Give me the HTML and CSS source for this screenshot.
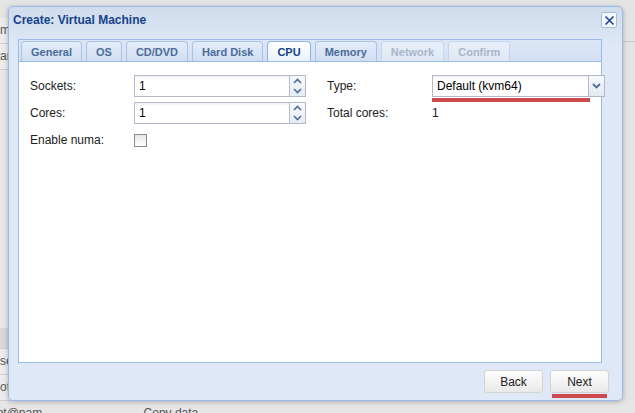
FILE: index.html
```html
<!DOCTYPE html>
<html lang="en">
<head>
    <meta charset="UTF-8">
    <title>Create: Virtual Machine</title>
    <link rel="stylesheet" href="styles.css">
</head>
<body>

<!-- page behind the modal -->
<div class="backdrop">
    <div class="bg-row bg-top">m</div>
    <div class="bg-row">ar</div>
    <div class="bg-fill"></div>
    <div class="bg-row bg-band"></div>
    <div class="bg-row">se</div>
    <div class="bg-row">ot</div>
    <div class="bg-foot">
        <span class="bg-mail">root@pam</span>
        <span class="bg-copy">Copy data</span>
    </div>
</div>
<div class="bg-line"></div>

<div class="win">
    <div class="win-head">
        <span class="win-title">Create: Virtual Machine</span>
        <span class="win-close">
            <svg width="11" height="11" viewBox="0 0 11 11"><path d="M1.5 1.5 L9.5 9.5 M9.5 1.5 L1.5 9.5" stroke="#15428b" stroke-width="1.6" fill="none"/></svg>
        </span>
    </div>

    <div class="tabpanel">
        <div class="tabbar">
            <span class="tab">General</span>
            <span class="tab">OS</span>
            <span class="tab">CD/DVD</span>
            <span class="tab">Hard Disk</span>
            <span class="tab active">CPU</span>
            <span class="tab">Memory</span>
            <span class="tab disabled">Network</span>
            <span class="tab disabled">Confirm</span>
        </div>
        <div class="tabbody">
            <div class="col">
                <div class="field">
                    <label class="lbl">Sockets:</label>
                    <div class="spin">
                        <input class="txt" type="text" value="1">
                        <div class="spin-btns">
                            <span class="arr"><svg width="9" height="6" viewBox="0 0 9 6"><path d="M1 5 L4.5 1.5 L8 5" stroke="#4d6d9e" stroke-width="1.6" fill="none"/></svg></span>
                            <span class="arr"><svg width="9" height="6" viewBox="0 0 9 6"><path d="M1 1 L4.5 4.5 L8 1" stroke="#4d6d9e" stroke-width="1.6" fill="none"/></svg></span>
                        </div>
                    </div>
                </div>
                <div class="field">
                    <label class="lbl">Cores:</label>
                    <div class="spin">
                        <input class="txt" type="text" value="1">
                        <div class="spin-btns">
                            <span class="arr"><svg width="9" height="6" viewBox="0 0 9 6"><path d="M1 5 L4.5 1.5 L8 5" stroke="#4d6d9e" stroke-width="1.6" fill="none"/></svg></span>
                            <span class="arr"><svg width="9" height="6" viewBox="0 0 9 6"><path d="M1 1 L4.5 4.5 L8 1" stroke="#4d6d9e" stroke-width="1.6" fill="none"/></svg></span>
                        </div>
                    </div>
                </div>
                <div class="field short">
                    <label class="lbl">Enable numa:</label>
                    <span class="chk"></span>
                </div>
            </div>
            <div class="col">
                <div class="field">
                    <label class="lbl">Type:</label>
                    <div class="combo">
                        <input class="txt" type="text" value="Default (kvm64)">
                        <span class="trigger"><svg width="9" height="6" viewBox="0 0 9 6"><path d="M1 1 L4.5 4.5 L8 1" stroke="#4d6d9e" stroke-width="1.8" fill="none"/></svg></span>
                        <span class="mark mark-type"></span>
                    </div>
                </div>
                <div class="field">
                    <label class="lbl">Total cores:</label>
                    <span class="val">1</span>
                </div>
            </div>
        </div>
    </div>

    <div class="win-foot">
        <button class="btn">Back</button>
        <button class="btn next">Next<span class="mark mark-next"></span></button>
    </div>
</div>

</body>
</html>
```

FILE: styles.css
```css
body {
    margin: 0;
    width: 635px;
    height: 413px;
    overflow: hidden;
    background-color: #e4e4e4;
    font-family: "Liberation Sans", Arial, sans-serif;
    font-size: 12px;
    color: #222;
    position: relative;
}
.backdrop {
    display: flex;
    flex-direction: column;
    height: 413px;
}
.bg-row {
    height: 25px;
    line-height: 25px;
    border-bottom: 1px solid #cfcfcf;
    color: #555;
    background-color: #ececec;
    width: 40px;
}
.bg-top {
    margin-top: 18px;
}
.bg-fill {
    flex: 1;
    width: 30px;
    background-color: #e8e8e8;
}
.bg-band {
    background-color: #d8d8d8;
    height: 20px;
}
.bg-foot {
    height: 12px;
    background-color: #e6e6e6;
    color: #555;
    line-height: 24px;
    overflow: hidden;
}
.bg-mail {
    margin-left: -14px;
}
.bg-copy {
    margin-left: 98px;
}
.bg-line {
    position: absolute;
    left: 622px;
    top: 41px;
    width: 13px;
    border-top: 1px solid #c8c8c8;
}

.win {
    position: absolute;
    left: 8px;
    top: 6px;
    width: 613px;
    height: 393px;
    border: 1px solid #99bbe8;
    border-radius: 5px;
    background: linear-gradient(#cfdcec, #dfe8f6 40px);
    box-shadow: 0 1px 5px rgba(0, 0, 0, 0.25);
    display: flex;
    flex-direction: column;
}
.win-head {
    height: 32px;
    display: flex;
    align-items: flex-start;
    justify-content: space-between;
    padding: 0 4px;
}
.win-title {
    font-weight: bold;
    font-size: 12px;
    color: #15428b;
    margin-top: 6px;
}
.win-close {
    width: 14px;
    height: 14px;
    border: 1px solid #a4bedf;
    border-radius: 2px;
    background-color: #f4f8fd;
    display: flex;
    align-items: center;
    justify-content: center;
    margin-right: 1px;
    margin-top: 5px;
}

.tabpanel {
    margin: 0 20px 0 9px;
    display: flex;
    flex-direction: column;
}
.tabbar {
    height: 21px;
    border: 1px solid #99bbe8;
    border-bottom: none;
    background: linear-gradient(#dce7f5, #d2e0f2);
    display: flex;
    align-items: flex-end;
    padding-left: 2px;
    gap: 4px;
}
.tab {
    height: 19px;
    line-height: 20px;
    padding: 0 9px;
    border: 1px solid #a9c3e6;
    border-bottom: none;
    border-radius: 4px 4px 0 0;
    background: linear-gradient(#e3edf9, #d0def1);
    color: #4c6b9a;
    font-weight: bold;
    font-size: 11px;
}
.tab.active {
    background: linear-gradient(#ffffff, #eaf1fb);
    color: #15428b;
    border-color: #8db2e3;
}
.tab.disabled {
    background: linear-gradient(#e8eff9, #dfe8f5);
    color: #a8b6cb;
    border-color: #c4d6ee;
}
.tabbody {
    height: 302px;
    border: 1px solid #99bbe8;
    background-color: #fff;
    display: flex;
    padding: 13px 0 0 11px;
    box-sizing: border-box;
    gap: 21px;
}
.col {
    display: flex;
    flex-direction: column;
    gap: 5px;
}
.field {
    display: flex;
    align-items: center;
    height: 22px;
}
.field.short {
    height: 14px;
    margin-top: 4px;
}
.lbl {
    width: 104px;
    font-size: 12px;
    color: #222;
}
.col + .col .lbl {
    width: 105px;
}
.spin, .combo {
    display: flex;
    height: 22px;
    position: relative;
}
.txt {
    box-sizing: border-box;
    height: 22px;
    border: 1px solid #b5b8c8;
    border-right: none;
    background: linear-gradient(#f2f2f2, #fff 4px);
    padding: 0 4px;
    font-family: "Liberation Sans", Arial, sans-serif;
    font-size: 12px;
    color: #000;
    outline: none;
}
.spin .txt {
    width: 155px;
}
.spin-btns {
    width: 17px;
    height: 22px;
    box-sizing: border-box;
    border: 1px solid #b5b8c8;
    display: flex;
    flex-direction: column;
    background: linear-gradient(#f7f9fc, #e6ecf4);
}
.arr {
    flex: 1;
    display: flex;
    align-items: center;
    justify-content: center;
}
.combo .txt {
    width: 156px;
}
.trigger {
    width: 17px;
    height: 22px;
    box-sizing: border-box;
    border: 1px solid #b5b8c8;
    background: linear-gradient(#f7f9fc, #e3e9f1);
    display: flex;
    align-items: center;
    justify-content: center;
}
.chk {
    width: 11px;
    height: 11px;
    border: 1px solid #8a8a8a;
    background: linear-gradient(#e6e6e6, #fff);
}
.val {
    font-size: 12px;
}
.mark {
    position: absolute;
    background-color: #cf4a4f;
}
.mark-type {
    left: 0;
    top: 23px;
    width: 158px;
    height: 4px;
}

.win-foot {
    display: flex;
    justify-content: flex-end;
    gap: 7px;
    padding: 7px 13px 0 0;
}
.btn {
    position: relative;
    width: 59px;
    height: 23px;
    border: 1px solid #d4d4d4;
    border-radius: 3px;
    background: linear-gradient(#fdfdfd, #e9e9e9);
    font-family: "Liberation Sans", Arial, sans-serif;
    font-size: 12px;
    color: #222;
    padding: 0;
}
.mark-next {
    left: 1px;
    top: 23px;
    width: 55px;
    height: 4px;
}
```
